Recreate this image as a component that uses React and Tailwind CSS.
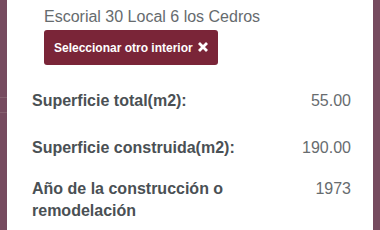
export default function App() {
  const font = { fontFamily: '"Liberation Sans", Arial, sans-serif' };
  return (
    <div className="flex h-[230px] w-[380px] overflow-hidden bg-white" style={font}>
      <div className="flex w-[7px] shrink-0 flex-col bg-[#764b5f]">
        <div className="h-[97px]" />
        <div className="h-[16px] border-y border-[#85606f]" />
      </div>
      <div className="flex flex-1 flex-col pl-[25px] pr-[22px]">
        <div className="pl-[12px] pt-[7px]">
          <div className="text-[16px] leading-[20px] text-[#666b6e]">Escorial 30 Local 6 los Cedros</div>
          <button className="mt-[3px] flex h-[35px] items-center gap-[4px] rounded-[3px] bg-[#7a2538] pl-[10px] pr-[9px] text-[12px] font-bold text-white">
            <span>Seleccionar otro interior</span>
            <svg width="12" height="12" viewBox="0 0 12 12" className="mt-[-1px]">
              <path d="M2 2 L10 10 M10 2 L2 10" stroke="white" strokeWidth="2.8" strokeLinecap="butt" />
            </svg>
          </button>
        </div>
        <div className="mt-[26px] flex justify-between text-[16px] leading-[20px]">
          <span className="w-[240px] font-bold text-[#4a5054]">Superficie total(m2):</span>
          <span className="text-[#676c6f]">55.00</span>
        </div>
        <div className="mt-[27px] flex justify-between text-[16px] leading-[20px]">
          <span className="w-[240px] font-bold text-[#4a5054]">Superficie construida(m2):</span>
          <span className="text-[#676c6f]">190.00</span>
        </div>
        <div className="mt-[20px] flex justify-between text-[16px] leading-[22px]">
          <span className="w-[240px] font-bold text-[#4a5054]">Año de la construcción o remodelación</span>
          <span className="text-[#676c6f]">1973</span>
        </div>
      </div>
      <div className="w-[7px] shrink-0 bg-[#764b5f]" />
    </div>
  );
}
